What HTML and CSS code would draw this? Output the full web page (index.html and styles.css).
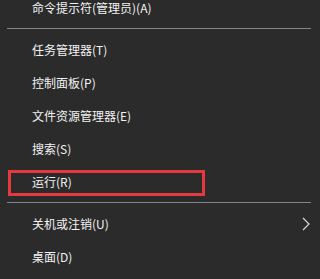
FILE: index.html
```html
<!DOCTYPE html>
<html lang="zh-CN">
<head>
<meta charset="utf-8">
<link rel="stylesheet" href="styles.css">
</head>
<body>
<div class="menu">
  <div class="item">命令提示符(管理员)(A)</div>
  <div class="sep"></div>
  <div class="item">任务管理器(T)</div>
  <div class="item">控制面板(P)</div>
  <div class="item">文件资源管理器(E)</div>
  <div class="item">搜索(S)</div>
  <div class="item marked">运行(R)</div>
  <div class="sep"></div>
  <div class="item">关机或注销(U)<svg class="chev" width="8" height="14" viewBox="0 0 8 14"><path d="M1 1 L7 7 L1 13" fill="none" stroke="#d8d8d8" stroke-width="1.2"/></svg></div>
  <div class="item">桌面(D)</div>
</div>
</body>
</html>
```
FILE: styles.css
```css
html, body {
  margin: 0;
  padding: 0;
  background: #2b2b2b;
  overflow: hidden;
}
.menu {
  display: flex;
  flex-direction: column;
  margin-top: -9px;
  font-family: "Noto Sans CJK SC", "Noto Sans", sans-serif;
  font-size: 12px;
  color: #f2f2f2;
}
.item {
  height: 33px;
  display: flex;
  align-items: center;
  padding-left: 32px;
  padding-right: 10px;
  position: relative;
}
.chev {
  margin-left: auto;
}
.sep {
  height: 1px;
  margin: 4px 9px 4px 7px;
  background: #858585;
}
.marked::after {
  content: "";
  position: absolute;
  left: 8px;
  top: 5px;
  width: 197px;
  height: 26px;
  box-sizing: border-box;
  border: 3px solid #e43a3f;
}
```
